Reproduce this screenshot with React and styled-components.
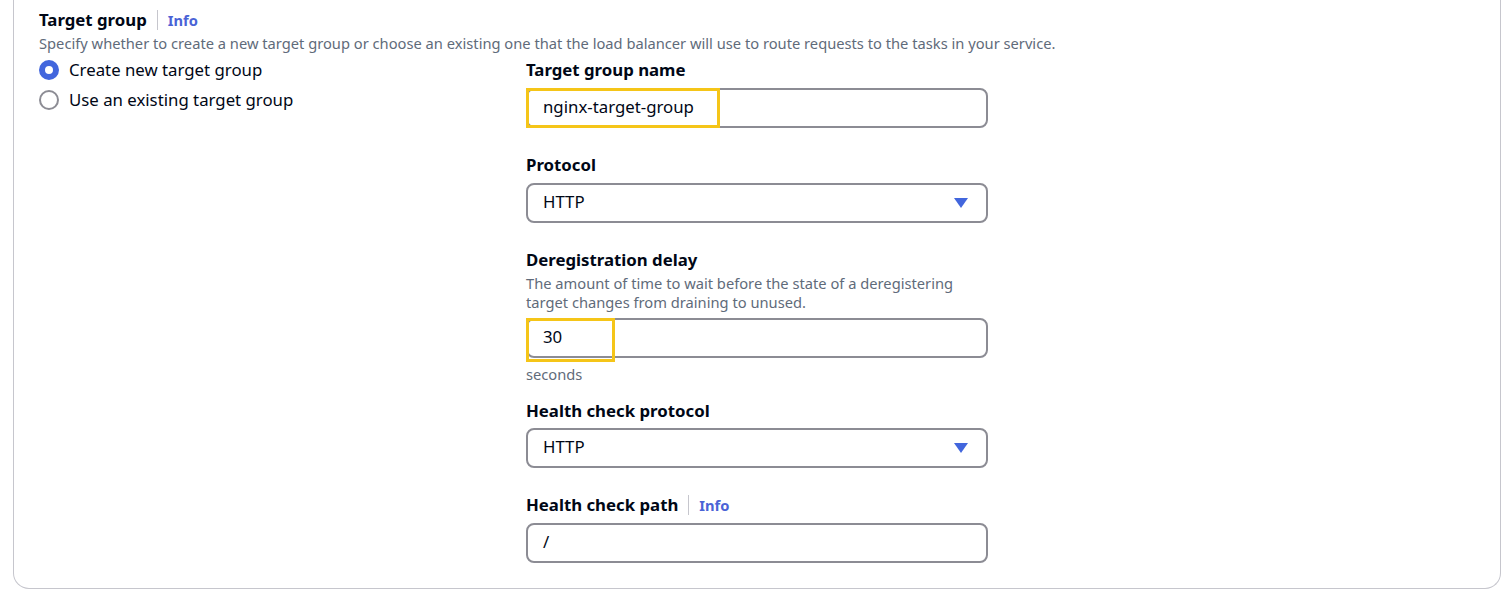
import React from "react";
import styled, { createGlobalStyle } from "styled-components";

const GlobalStyle = createGlobalStyle`
  body {
    margin: 0;
    background: #fff;
    font-family: "Noto Sans", "Open Sans", sans-serif;
    color: #000716;
  }
`;

const Card = styled.div`
  margin-left: 13px;
  width: 1488px;
  box-sizing: border-box;
  border: 1px solid #c6c6cd;
  border-top: none;
  border-radius: 0 0 16px 16px;
  padding: 9px 25px 25px 25px;
`;

const Header = styled.div`
  display: flex;
  align-items: center;
  height: 22px;
`;

const Title = styled.h2`
  margin: 0;
  font-size: 16.8px;
  font-weight: 700;
  line-height: 22px;
`;

const Divider = styled.span`
  width: 1px;
  height: 20px;
  background: #c6c6cd;
  margin: 0 10px;
`;

const InfoLink = styled.a`
  font-size: 14.7px;
  font-weight: 700;
  color: #4a63d6;
  text-decoration: none;
`;

const Description = styled.p`
  margin: 2px 0 0;
  font-size: 14.7px;
  line-height: 20px;
  color: #5f6b7a;
`;

const Body = styled.div`
  display: grid;
  grid-template-columns: 487px 462px;
  margin-top: 6px;
`;

const RadioGroup = styled.div`
  display: flex;
  flex-direction: column;
  gap: 8px;
`;

const RadioRow = styled.label`
  display: flex;
  align-items: center;
  gap: 10px;
  font-size: 16.8px;
  line-height: 22px;
  color: #000716;
`;

const RadioDot = styled.span`
  width: 20px;
  height: 20px;
  box-sizing: border-box;
  border-radius: 50%;
  flex-shrink: 0;
  background: #fff;
  ${(p) =>
    p.checked
      ? `border: 6px solid #4266dd;`
      : `border: 2px solid #8c8c94;`}
`;

const Fields = styled.div`
  display: flex;
  flex-direction: column;
`;

const Field = styled.div`
  display: flex;
  flex-direction: column;
  margin-bottom: ${(p) => (p.tight ? 16 : 26)}px;
  &:last-child {
    margin-bottom: 0;
  }
`;

const LabelRow = styled.div`
  display: flex;
  align-items: center;
  height: 22px;
`;

const Label = styled.span`
  font-size: 16.8px;
  font-weight: 700;
  line-height: 22px;
  color: #000716;
`;

const Hint = styled.div`
  font-size: 14.7px;
  line-height: 19px;
  color: #5f6b7a;
  max-width: 450px;
  margin-top: 3px;
`;

const Control = styled.div`
  position: relative;
  margin-top: ${(p) => p.mt ?? 7}px;
  height: 40px;
  box-sizing: border-box;
  border: 2px solid #8c8c94;
  border-radius: 8px;
  display: flex;
  align-items: center;
  justify-content: space-between;
  padding: 0 18px 3px 15px;
  font-size: 16.8px;
  color: #000716;
`;

const Caret = styled.span`
  width: 0;
  height: 0;
  border-left: 7px solid transparent;
  border-right: 7px solid transparent;
  border-top: 10px solid #4266dd;
  margin-top: 3px;
`;

const Highlight = styled.span`
  position: absolute;
  left: -2px;
  top: -2px;
  width: ${(p) => p.w}px;
  height: ${(p) => p.h}px;
  box-sizing: border-box;
  border: 3px solid #f5c518;
  pointer-events: none;
`;

const Unit = styled.div`
  font-size: 14.7px;
  line-height: 20px;
  color: #5f6b7a;
  margin-top: 6px;
`;

export default function App() {
  return (
    <>
      <GlobalStyle />
      <Card>
        <Header>
          <Title>Target group</Title>
          <Divider />
          <InfoLink href="#">Info</InfoLink>
        </Header>
        <Description>
          Specify whether to create a new target group or choose an existing one that the load
          balancer will use to route requests to the tasks in your service.
        </Description>
        <Body>
          <RadioGroup>
            <RadioRow>
              <RadioDot checked />
              Create new target group
            </RadioRow>
            <RadioRow>
              <RadioDot />
              Use an existing target group
            </RadioRow>
          </RadioGroup>
          <Fields>
            <Field>
              <LabelRow>
                <Label>Target group name</Label>
              </LabelRow>
              <Control>
                nginx-target-group
                <Highlight w={194} h={40} />
              </Control>
            </Field>
            <Field>
              <LabelRow>
                <Label>Protocol</Label>
              </LabelRow>
              <Control>
                HTTP
                <Caret />
              </Control>
            </Field>
            <Field tight>
              <LabelRow>
                <Label>Deregistration delay</Label>
              </LabelRow>
              <Hint>
                The amount of time to wait before the state of a deregistering target changes from
                draining to unused.
              </Hint>
              <Control mt={6}>
                30
                <Highlight w={89} h={44} />
              </Control>
              <Unit>seconds</Unit>
            </Field>
            <Field>
              <LabelRow>
                <Label>Health check protocol</Label>
              </LabelRow>
              <Control mt={6}>
                HTTP
                <Caret />
              </Control>
            </Field>
            <Field>
              <LabelRow>
                <Label>Health check path</Label>
                <Divider />
                <InfoLink href="#">Info</InfoLink>
              </LabelRow>
              <Control>/</Control>
            </Field>
          </Fields>
        </Body>
      </Card>
    </>
  );
}
